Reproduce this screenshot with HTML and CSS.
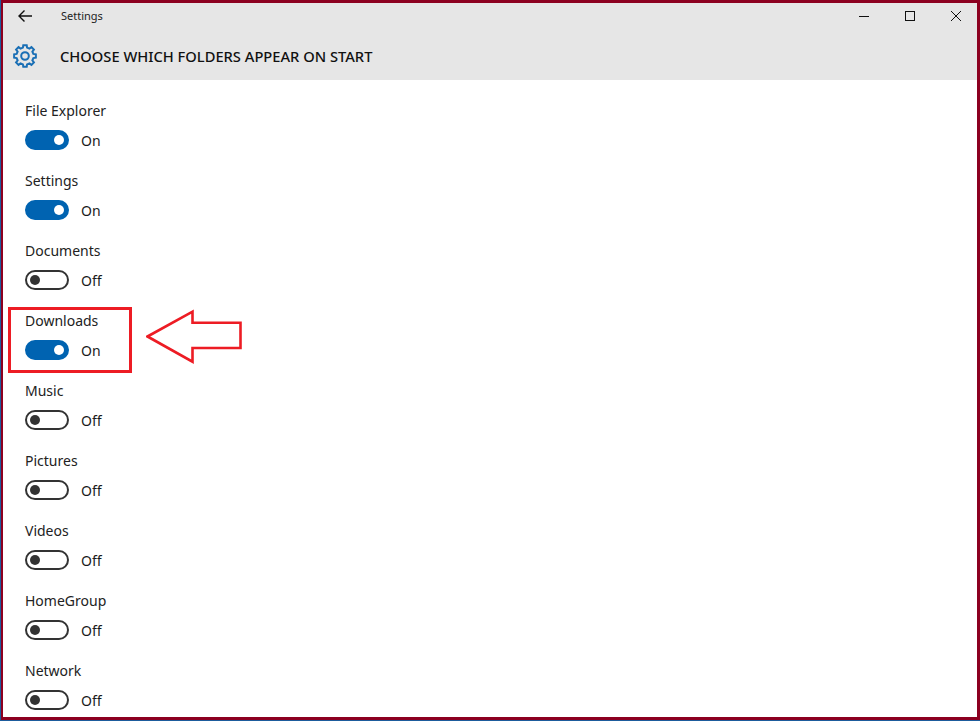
FILE: index.html
```html
<!DOCTYPE html>
<html lang="en">

<head>
  <meta charset="UTF-8">
  <title>Settings</title>
  <link rel="stylesheet" href="styles.css">
</head>

<body>
  <div class="frame">
    <div class="window">
      <div class="titlebar">
        <svg class="back" width="16" height="14" viewBox="0 0 16 14">
          <path d="M15 7H2M7.500 1.500L2 7l5.500 5.500" fill="none" stroke="#111" stroke-width="1.400" />
        </svg>
        <span class="app-name">Settings</span>
        <div class="controls">
          <svg width="10" height="10" viewBox="0 0 10 10">
            <path d="M0 5.500h10" stroke="#111" stroke-width="1" />
          </svg>
          <svg width="10" height="10" viewBox="0 0 10 10">
            <rect x=".5" y=".5" width="9" height="9" fill="none" stroke="#111" />
          </svg>
          <svg width="10" height="10" viewBox="0 0 10 10">
            <path d="M0 0l10 10M10 0L0 10" stroke="#111" stroke-width="1" />
          </svg>
        </div>
      </div>

      <header class="page-head">
        <svg class="gear" width="24" height="24" viewBox="0 0 24 24">
          <path d="M9.920 3.660L10.280 1.140H13.720L14.080 3.660L16.430 4.630L18.470 3.100L20.900 5.530L19.370 7.570L20.340 9.920L22.860 10.280V13.720L20.340 14.080L19.370 16.430L20.900 18.470L18.470 20.900L16.430 19.370L14.080 20.340L13.720 22.860H10.280L9.920 20.340L7.570 19.370L5.530 20.900L3.100 18.470L4.630 16.430L3.660 14.080L1.140 13.720V10.280L3.660 9.920L4.630 7.570L3.100 5.530L5.530 3.100L7.570 4.630z" fill="none" stroke="#1a6fb5" stroke-width="2" />
          <circle cx="12" cy="12" r="3.800" fill="none" stroke="#1a6fb5" stroke-width="2" />
        </svg>
        <h1>CHOOSE WHICH FOLDERS APPEAR ON START</h1>
      </header>

      <main class="list">
        <div class="row">
          <div class="label">File Explorer</div>
          <div class="setting"><span class="toggle on"></span><span>On</span></div>
        </div>
        <div class="row">
          <div class="label">Settings</div>
          <div class="setting"><span class="toggle on"></span><span>On</span></div>
        </div>
        <div class="row">
          <div class="label">Documents</div>
          <div class="setting"><span class="toggle"></span><span>Off</span></div>
        </div>
        <div class="row">
          <div class="label">Downloads</div>
          <div class="setting"><span class="toggle on"></span><span>On</span></div>
        </div>
        <div class="row">
          <div class="label">Music</div>
          <div class="setting"><span class="toggle"></span><span>Off</span></div>
        </div>
        <div class="row">
          <div class="label">Pictures</div>
          <div class="setting"><span class="toggle"></span><span>Off</span></div>
        </div>
        <div class="row">
          <div class="label">Videos</div>
          <div class="setting"><span class="toggle"></span><span>Off</span></div>
        </div>
        <div class="row">
          <div class="label">HomeGroup</div>
          <div class="setting"><span class="toggle"></span><span>Off</span></div>
        </div>
        <div class="row">
          <div class="label">Network</div>
          <div class="setting"><span class="toggle"></span><span>Off</span></div>
        </div>
      </main>

      <!-- red markup drawn over the screenshot -->
      <div class="mark-box"></div>
      <svg class="mark-arrow" width="100" height="60" viewBox="0 0 100 60">
        <path d="M1.500 28.500L46.500 3.700v11h48v25.300h-48v13.700z" fill="#fff" stroke="#ed1c24" stroke-width="2.600" />
      </svg>
    </div>
  </div>
</body>

</html>
```

FILE: styles.css
```css
* {
  box-sizing: border-box;
}

html,
body {
  margin: 0;
  height: 100%;
}

body {
  background: #fff;
  font-family: "Noto Sans", "Open Sans", sans-serif;
  color: #1a1a1a;
  overflow: hidden;
}

.frame {
  width: 980px;
  height: 721px;
  border-left: 1px solid #1d5c9c;
  border-bottom: 1px solid #1d5c9c;
}

.window {
  position: relative;
  height: 720px;
  overflow: hidden;
  border: 3px solid #8c0020;
  border-left-width: 2px;
}

.titlebar {
  display: flex;
  align-items: center;
  height: 25px;
  background: #e6e6e6;
}

.back {
  margin-left: 14px;
}

.app-name {
  margin-left: 28px;
  font-size: 11px;
  color: #222;
}

.controls {
  display: flex;
  gap: 36px;
  margin-left: auto;
  margin-right: 16px;
}

.page-head {
  display: flex;
  align-items: center;
  height: 52px;
  background: #e6e6e6;
  padding-left: 10px;
  padding-top: 4px;
}

.gear {
  flex: none;
}

h1 {
  margin: 0 0 0 23px;
  font-size: 14.700px;
  font-weight: 500;
  color: #111;
}

.list {
  padding-left: 22px;
  padding-top: 20px;
}

.row {
  height: 70px;
}

.label {
  font-size: 14px;
  line-height: 22px;
  color: #222;
}

.setting {
  display: flex;
  gap: 12px;
  margin-top: 8px;
  font-size: 14px;
  line-height: 22px;
}

.toggle {
  position: relative;
  display: block;
  width: 44px;
  height: 20px;
  border: 2px solid #333;
  border-radius: 10px;
  background: #fff;
}

.toggle::after {
  content: "";
  position: absolute;
  left: 3px;
  top: 3px;
  width: 10px;
  height: 10px;
  border-radius: 50%;
  background: #333;
}

.toggle.on {
  border-color: #0063b1;
  background: #0063b1;
}

.toggle.on::after {
  left: auto;
  right: 3px;
  background: #fff;
}

.mark-box {
  position: absolute;
  left: 5px;
  top: 304px;
  width: 124px;
  height: 66px;
  border: 3px solid #ed1c24;
}

.mark-arrow {
  position: absolute;
  left: 143px;
  top: 305px;
}
```
